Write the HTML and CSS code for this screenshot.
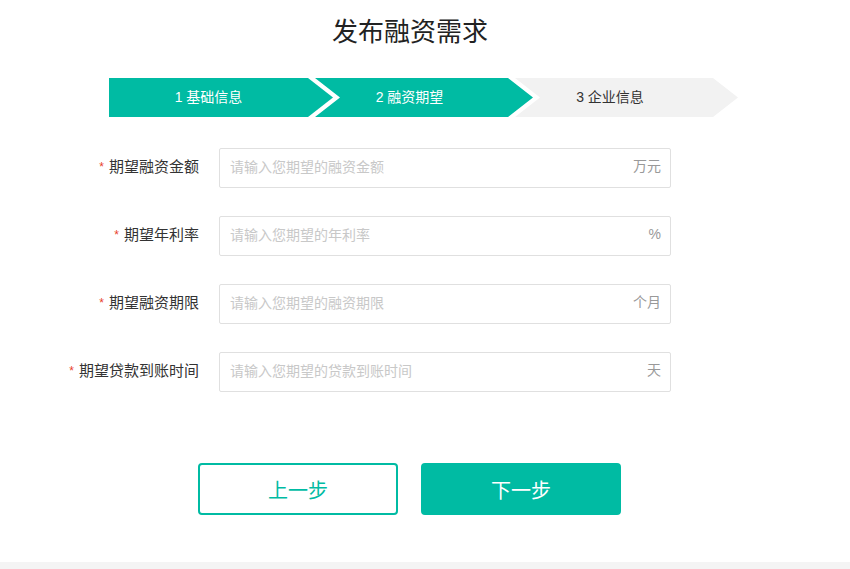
FILE: index.html
```html
<!DOCTYPE html>
<html lang="zh-CN">
<head>
<meta charset="utf-8">
<title>发布融资需求</title>
<link rel="stylesheet" href="styles.css">
</head>
<body>
<div class="page">
  <div class="wrap">
    <h1 class="title">发布融资需求</h1>
    <div class="steps">
      <div class="step step-first done">1 基础信息</div>
      <div class="step step-mid done">2 融资期望</div>
      <div class="step step-last">3 企业信息</div>
    </div>
    <form class="form">
      <div class="row">
        <label class="label"><span class="req">*</span>期望融资金额</label>
        <div class="field">
          <input class="input" type="text" placeholder="请输入您期望的融资金额">
          <span class="suffix">万元</span>
        </div>
      </div>
      <div class="row">
        <label class="label"><span class="req">*</span>期望年利率</label>
        <div class="field">
          <input class="input" type="text" placeholder="请输入您期望的年利率">
          <span class="suffix">%</span>
        </div>
      </div>
      <div class="row">
        <label class="label"><span class="req">*</span>期望融资期限</label>
        <div class="field">
          <input class="input" type="text" placeholder="请输入您期望的融资期限">
          <span class="suffix">个月</span>
        </div>
      </div>
      <div class="row">
        <label class="label"><span class="req">*</span>期望贷款到账时间</label>
        <div class="field">
          <input class="input" type="text" placeholder="请输入您期望的贷款到账时间">
          <span class="suffix">天</span>
        </div>
      </div>
    </form>
    <div class="actions">
      <button class="btn btn-prev" type="button">上一步</button>
      <button class="btn btn-next" type="button">下一步</button>
    </div>
  </div>
  <div class="footer-band"></div>
</div>
</body>
</html>
```

FILE: styles.css
```css
* { box-sizing: border-box; }
html, body { margin: 0; padding: 0; background: #fff; }
body {
  font-family: "Liberation Sans", "Noto Sans CJK SC", sans-serif;
  color: #333;
  width: 850px;
  height: 569px;
  overflow: hidden;
}
.page { padding-top: 14px; }
.wrap { width: 700px; margin-left: 60px; }
.title {
  margin: 0;
  font-size: 26px;
  line-height: 36px;
  font-weight: normal;
  text-align: center;
  color: #222;
}
.steps {
  display: flex;
  margin: 28px 0 0 49px;
  height: 39px;
}
.step {
  height: 39px;
  line-height: 39px;
  font-size: 14px;
  text-align: center;
  background: #f2f2f2;
  color: #333;
}
.step.done { background: #00bba3; color: #fff; }
.step-first {
  width: 224px;
  padding-right: 25px;
  clip-path: polygon(0 0, calc(100% - 25px) 0, 100% 50%, calc(100% - 25px) 100%, 0 100%);
}
.step-mid {
  width: 218px;
  margin-left: -18px;
  padding-left: 0;
  padding-right: 29px;
  clip-path: polygon(0 0, calc(100% - 25px) 0, 100% 50%, calc(100% - 25px) 100%, 0 100%, 25px 50%);
}
.step-last {
  width: 223px;
  margin-left: -18px;
  padding-left: 0;
  padding-right: 33px;
  clip-path: polygon(0 0, calc(100% - 25px) 0, 100% 50%, calc(100% - 25px) 100%, 0 100%, 25px 50%);
}
.form {
  margin-top: 31px;
  display: flex;
  flex-direction: column;
  gap: 28px;
}
.row {
  display: flex;
  align-items: center;
  height: 40px;
}
.label {
  width: 139px;
  text-align: right;
  font-size: 15px;
  line-height: 20px;
  padding-bottom: 3px;
  color: #333;
  margin-right: 20px;
  white-space: nowrap;
}
.req {
  color: #e8412c;
  font-size: 12px;
  margin-right: 5px;
  vertical-align: 1px;
}
.field {
  position: relative;
  width: 452px;
  height: 40px;
}
.input {
  width: 100%;
  height: 40px;
  border: 1px solid #e0e0e0;
  border-radius: 2px;
  padding: 0 50px 2px 10px;
  font-family: "Liberation Sans", "Noto Sans CJK SC", sans-serif;
  font-size: 14px;
  color: #333;
  outline: none;
  background: #fff;
}
.input::placeholder { color: #c8c8c8; }
.suffix {
  position: absolute;
  right: 10px;
  top: 0;
  line-height: 36px;
  font-size: 14px;
  color: #999;
}
.actions {
  display: flex;
  gap: 23px;
  padding-left: 138px;
  margin-top: 71px;
}
.btn {
  width: 200px;
  height: 52px;
  border-radius: 4px;
  font-family: "Liberation Sans", "Noto Sans CJK SC", sans-serif;
  font-size: 20px;
  cursor: pointer;
}
.btn-prev {
  background: #fff;
  border: 2px solid #00bba3;
  color: #00bba3;
}
.btn-next {
  background: #00bba3;
  border: 2px solid #00bba3;
  color: #fff;
}
.footer-band {
  margin-top: 47px;
  height: 20px;
  background: #f4f4f4;
}
```
